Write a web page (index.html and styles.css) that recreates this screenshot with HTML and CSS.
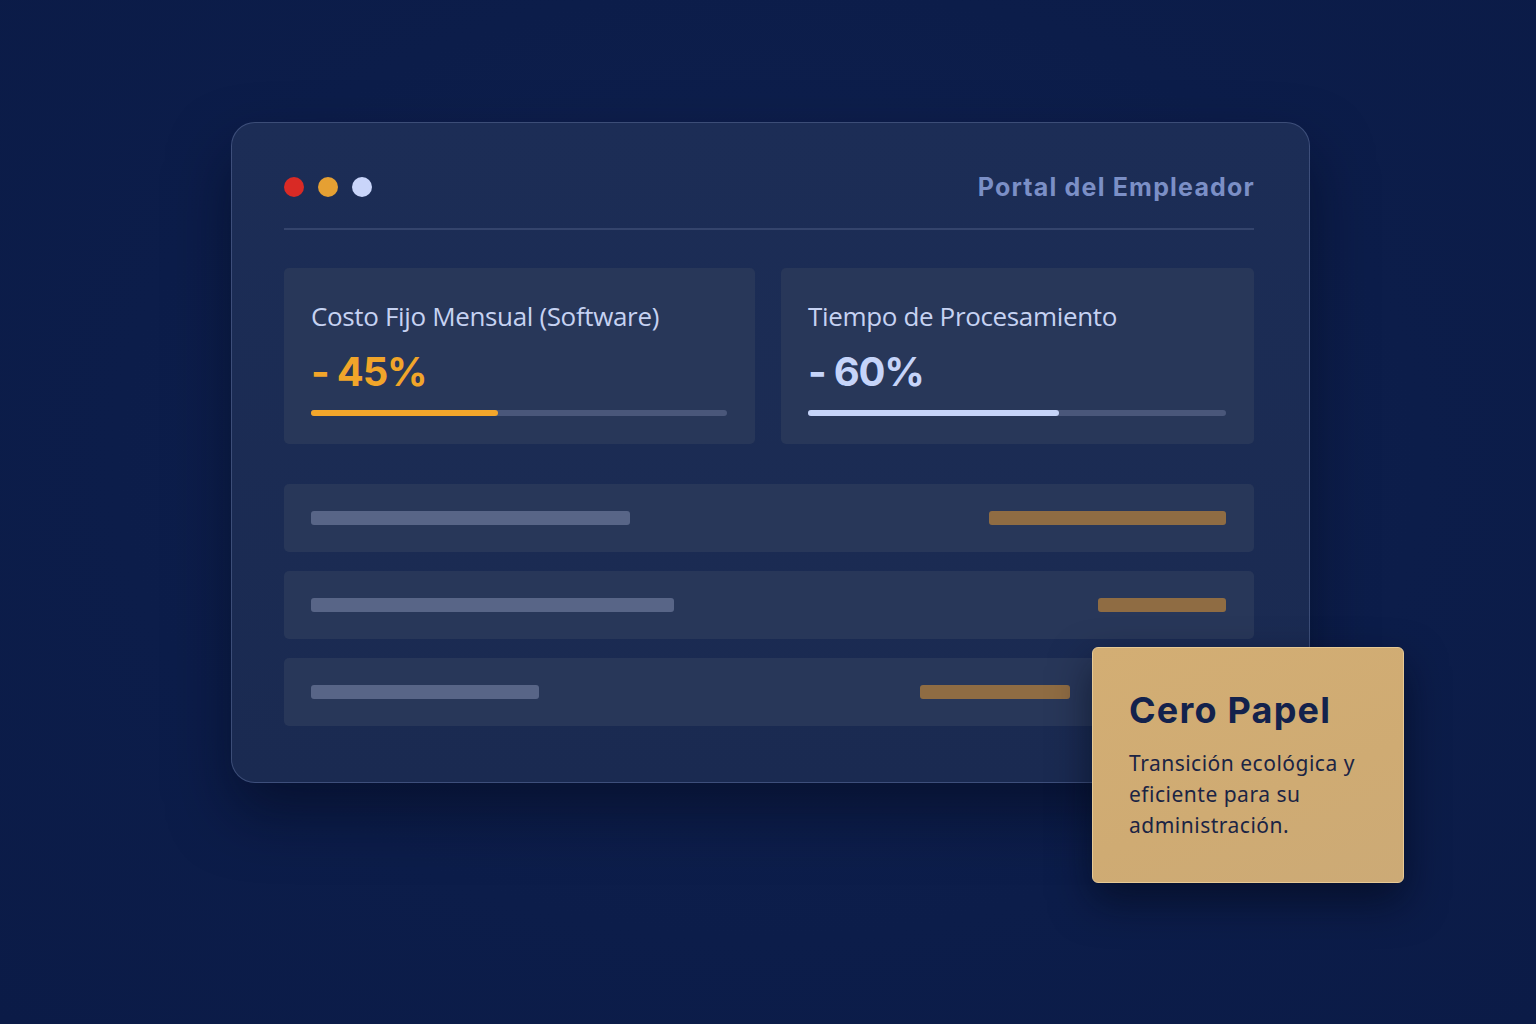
FILE: index.html
```html
<!DOCTYPE html>
<html lang="es">
<head>
<meta charset="utf-8">
<title>Portal del Empleador</title>
<link rel="stylesheet" href="styles.css">
</head>
<body>
<div class="stage">
  <div class="window">
    <div class="header">
      <div class="dots">
        <span class="dot red"></span>
        <span class="dot orange"></span>
        <span class="dot light"></span>
      </div>
      <div class="portal">Portal del Empleador</div>
    </div>
    <div class="divider"></div>
    <div class="stats">
      <div class="stat">
        <div class="stat-title">Costo Fijo Mensual (Software)</div>
        <div class="stat-value orange-text">- 45%</div>
        <div class="track"><div class="fill fill-orange" style="width:45%"></div></div>
      </div>
      <div class="stat">
        <div class="stat-title">Tiempo de Procesamiento</div>
        <div class="stat-value light-text">- 60%</div>
        <div class="track"><div class="fill fill-light" style="width:60%"></div></div>
      </div>
    </div>
    <div class="rows">
      <div class="row">
        <div class="bar gray" style="width:319px"></div>
        <div class="bar gold" style="width:237px"></div>
      </div>
      <div class="row">
        <div class="bar gray" style="width:363px"></div>
        <div class="bar gold" style="width:128px"></div>
      </div>
      <div class="row row-last">
        <div class="bar gray" style="width:228px"></div>
        <div class="bar gold" style="width:150px"></div>
      </div>
    </div>
  </div>
  <div class="note">
    <div class="note-title">Cero Papel</div>
    <p class="note-text">Transición ecológica y eficiente para su administración.</p>
  </div>
</div>
</body>
</html>
```

FILE: styles.css
```css
html, body {
  margin: 0;
  padding: 0;
}
body {
  width: 1536px;
  height: 1024px;
  overflow: hidden;
  background: radial-gradient(ellipse at 50% 45%, #10214f 0%, #0c1d4a 60%, #0b1b47 100%);
  font-family: "Open Sans", "Noto Sans", sans-serif;
}
.stage {
  position: relative;
  padding: 122px 0 0 231px;
}
.window {
  width: 1079px;
  height: 661px;
  box-sizing: border-box;
  padding: 44px 55px 55px 52px;
  border-radius: 24px;
  background: linear-gradient(180deg, #1c2d56 0%, #1a2a51 100%);
  border: 1px solid rgba(150, 170, 220, 0.28);
  box-shadow: 0 30px 60px rgba(4, 10, 30, 0.55);
  display: flex;
  flex-direction: column;
}
.window > * {
  flex-shrink: 0;
}
.header {
  height: 40px;
  display: flex;
  align-items: center;
  justify-content: space-between;
}
.dots {
  display: flex;
  gap: 14px;
}
.dot {
  width: 20px;
  height: 20px;
  border-radius: 50%;
  display: block;
}
.dot.red { background: #d92a25; }
.dot.orange { background: #e5a033; }
.dot.light { background: #c9d5fa; }
.portal {
  font-family: Inter, "Noto Sans", sans-serif;
  font-weight: 700;
  font-size: 25px;
  letter-spacing: 1.2px;
  color: #7b8fc6;
  margin-right: -1px;
}
.divider {
  margin-top: 21px;
  height: 2px;
  background: #34446c;
}
.stats {
  margin-top: 38px;
  display: grid;
  grid-template-columns: 471px 473px;
  gap: 26px;
}
.stat {
  height: 176px;
  box-sizing: border-box;
  padding: 30px 28px 0 27px;
  background: #283759;
  border-radius: 5px;
}
.stat-title {
  font-size: 26px;
  font-weight: 400;
  color: #c6d2f2;
  line-height: 36px;
  letter-spacing: -0.35px;
}
.stat-value {
  margin-top: 16px;
  font-family: Inter, "Noto Sans", sans-serif;
  font-weight: 700;
  font-size: 40px;
  line-height: 44px;
  letter-spacing: -1.2px;
}
.orange-text { color: #f1a52a; }
.light-text { color: #c6d4f9; }
.track {
  margin-top: 16px;
  height: 6px;
  border-radius: 3px;
  background: #4a577a;
}
.fill {
  height: 100%;
  border-radius: 3px;
}
.fill-orange { background: #f3a62b; }
.fill-light { background: #c6d4f9; }
.rows {
  margin-top: 40px;
  display: flex;
  flex-direction: column;
  gap: 19px;
}
.row {
  height: 68px;
  box-sizing: border-box;
  padding: 0 28px 0 27px;
  background: #283759;
  border-radius: 5px;
  display: flex;
  align-items: center;
  justify-content: space-between;
}
.row-last {
  padding-right: 184px;
}
.bar {
  height: 14px;
  border-radius: 3px;
}
.bar.gray { background: #586587; }
.bar.gold { background: #8f6c43; }
.note {
  position: absolute;
  left: 1092px;
  top: 647px;
  width: 312px;
  height: 236px;
  box-sizing: border-box;
  padding: 40px 20px 0 36px;
  border-radius: 6px;
  background: linear-gradient(160deg, #d3ae74 0%, #cfab73 60%, #ccaa76 100%);
  border: 1px solid #e6c995;
  box-shadow: 0 18px 40px rgba(3, 8, 25, 0.6);
}
.note-title {
  font-family: Inter, "Noto Sans", sans-serif;
  font-weight: 700;
  font-size: 36px;
  line-height: 44px;
  color: #13224c;
  letter-spacing: 1.2px;
}
.note-text {
  margin: 16px 0 0 0;
  font-family: "Noto Sans", "Open Sans", sans-serif;
  font-size: 21px;
  line-height: 31px;
  color: #1b2444;
  letter-spacing: 0.5px;
}
```
